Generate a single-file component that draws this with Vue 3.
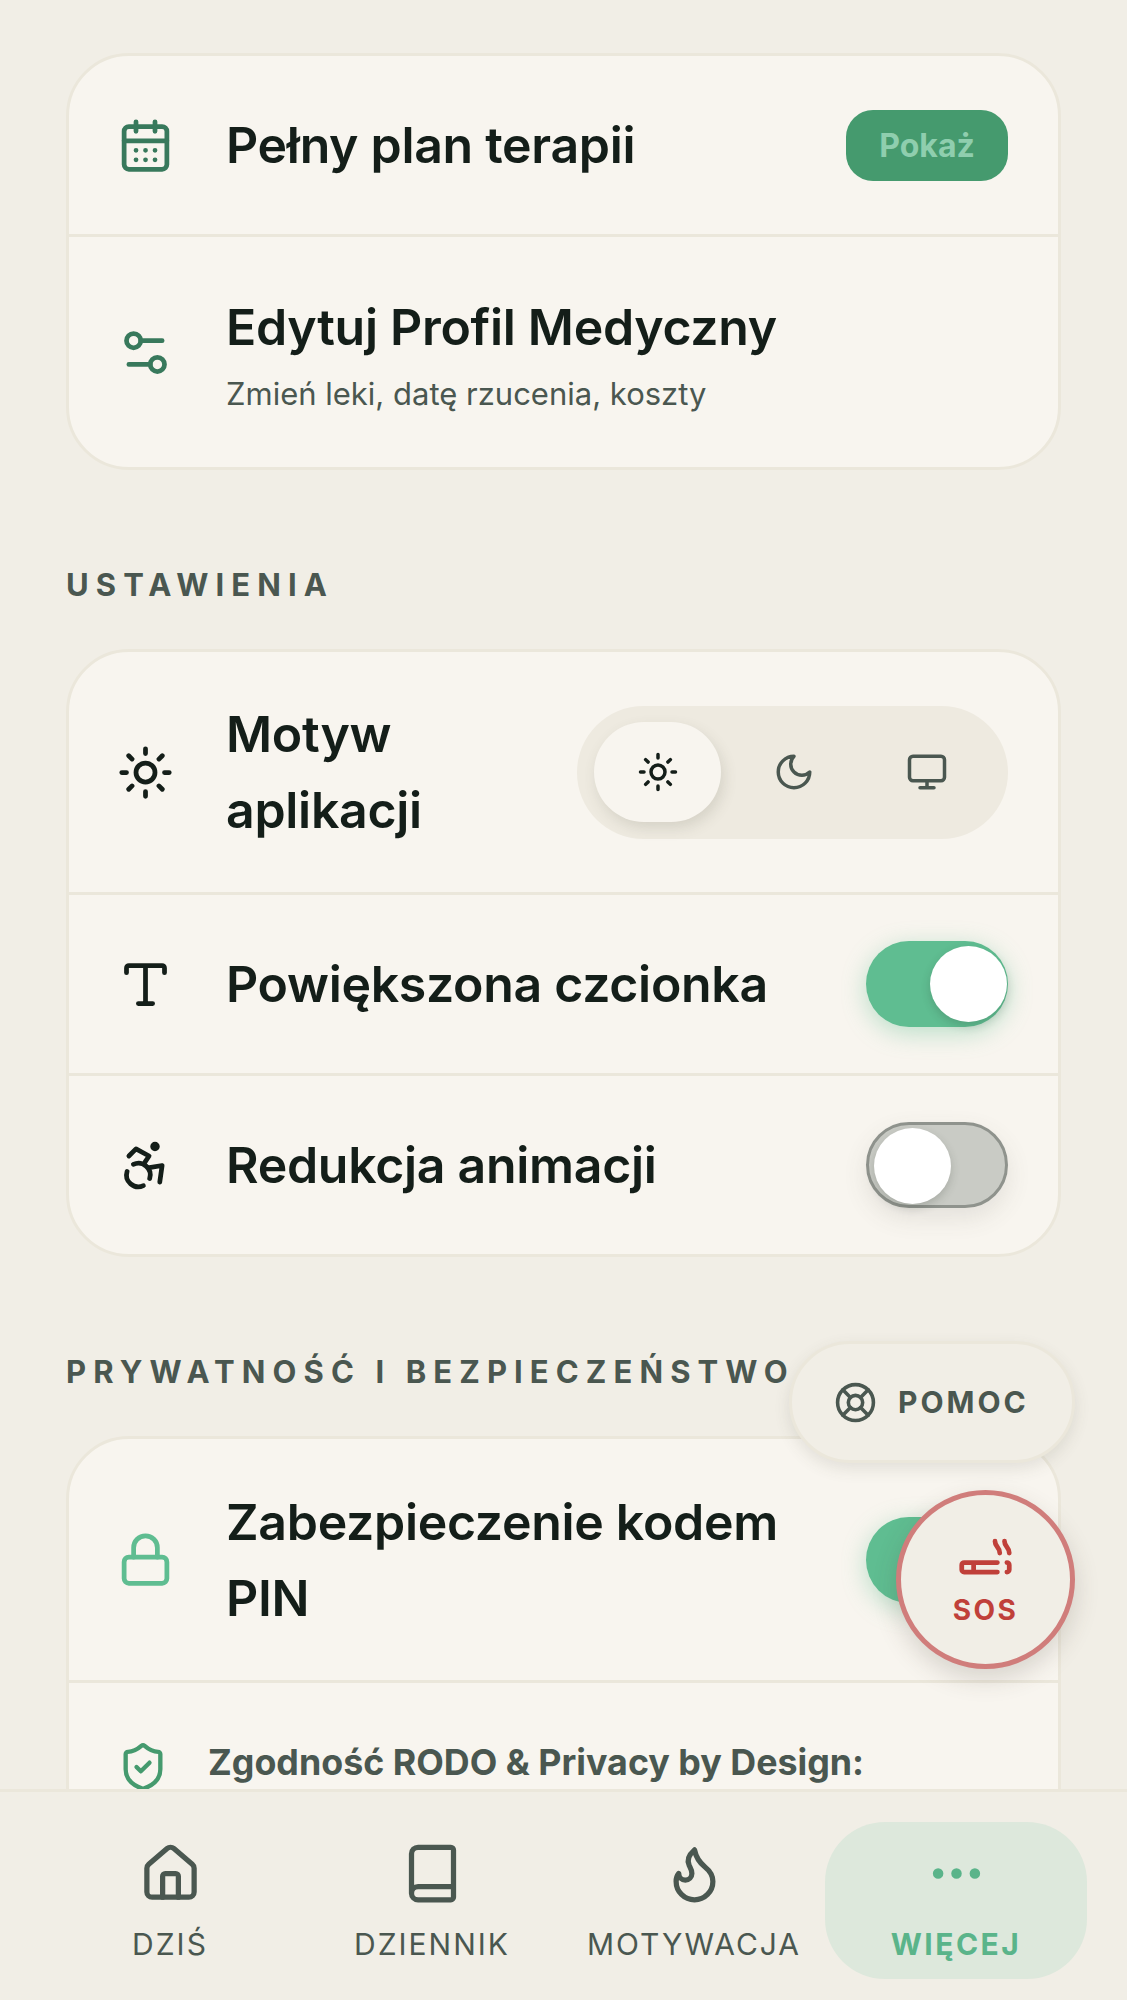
<script setup>
const navItems = [
  { label: 'DZIŚ', icon: 'home' },
  { label: 'DZIENNIK', icon: 'book' },
  { label: 'MOTYWACJA', icon: 'flame' },
  { label: 'WIĘCEJ', icon: 'more', active: true }
]
</script>

<template>
  <div class="phone">
    <main class="content">
      <div class="section-label top-label">TWOJA TERAPIA</div>

      <section class="card">
        <div class="row row-plan">
          <svg class="row-icon green" viewBox="0 0 24 24">
            <path d="M8 2v4M16 2v4" />
            <rect x="3" y="4" width="18" height="18" rx="2" />
            <path d="M3 10h18M8 14h.01M12 14h.01M16 14h.01M8 18h.01M12 18h.01M16 18h.01" />
          </svg>
          <div class="row-title">Pełny plan terapii</div>
          <button class="show-btn">Pokaż</button>
        </div>
        <div class="row row-edit">
          <svg class="row-icon green" viewBox="0 0 24 24">
            <circle cx="7" cy="7" r="3" />
            <path d="M10 7h9M14 17H5" />
            <circle cx="17" cy="17" r="3" />
          </svg>
          <div class="row-text">
            <div class="row-title">Edytuj Profil Medyczny</div>
            <div class="row-sub">Zmień leki, datę rzucenia, koszty</div>
          </div>
        </div>
      </section>

      <div class="section-label">USTAWIENIA</div>

      <section class="card">
        <div class="row row-theme">
          <svg class="row-icon dark" viewBox="0 0 24 24">
            <circle cx="12" cy="12" r="4" />
            <path d="M12 2v2M12 20v2M4.93 4.93l1.41 1.41M17.66 17.66l1.41 1.41M2 12h2M20 12h2M6.34 17.66l-1.41 1.41M19.07 4.93l-1.41 1.41" />
          </svg>
          <div class="row-title">Motyw<br />aplikacji</div>
          <div class="segment">
            <div class="seg-item seg-active">
              <svg viewBox="0 0 24 24" class="seg-icon dark">
                <circle cx="12" cy="12" r="4" />
                <path d="M12 2v2M12 20v2M4.93 4.93l1.41 1.41M17.66 17.66l1.41 1.41M2 12h2M20 12h2M6.34 17.66l-1.41 1.41M19.07 4.93l-1.41 1.41" />
              </svg>
            </div>
            <div class="seg-item">
              <svg viewBox="0 0 24 24" class="seg-icon muted">
                <path d="M12 3a6 6 0 0 0 9 9 9 9 0 1 1-9-9Z" />
              </svg>
            </div>
            <div class="seg-item">
              <svg viewBox="0 0 24 24" class="seg-icon muted">
                <rect x="2" y="3" width="20" height="14" rx="2" />
                <path d="M8 21h8M12 17v4" />
              </svg>
            </div>
          </div>
        </div>
        <div class="row row-toggle">
          <svg class="row-icon dark" viewBox="0 0 24 24">
            <path d="M4 7V5a1 1 0 0 1 1-1h14a1 1 0 0 1 1 1v2M12 4v16M9 20h6" />
          </svg>
          <div class="row-title">Powiększona czcionka</div>
          <div class="toggle on"><span class="thumb"></span></div>
        </div>
        <div class="row row-toggle">
          <svg class="row-icon dark" viewBox="0 0 24 24">
            <circle cx="16" cy="4" r="1" />
            <path d="m18 19 1-7-6 1M5 8l3-3 5.5 3-2.36 3.5M4.24 14.5a5 5 0 0 0 6.88 6M13.76 17.5a5 5 0 0 0-6.88-6" />
          </svg>
          <div class="row-title">Redukcja animacji</div>
          <div class="toggle off"><span class="thumb"></span></div>
        </div>
      </section>

      <div class="section-label">PRYWATNOŚĆ I BEZPIECZEŃSTWO</div>

      <section class="card">
        <div class="row row-pin">
          <svg class="row-icon light-green" viewBox="0 0 24 24">
            <rect x="3" y="11" width="18" height="11" rx="2" />
            <path d="M7 11V7a5 5 0 0 1 10 0v4" />
          </svg>
          <div class="row-title">Zabezpieczenie kodem<br />PIN</div>
          <div class="toggle on"><span class="thumb"></span></div>
        </div>
        <div class="row-rodo">
          <svg class="rodo-icon" viewBox="0 0 24 24">
            <path d="M20 13c0 5-3.5 7.5-7.66 8.95a1 1 0 0 1-.67-.01C7.5 20.5 4 18 4 13V6a1 1 0 0 1 1-1c2 0 4.5-1.2 6.24-2.72a1.17 1.17 0 0 1 1.52 0C14.51 3.81 17 5 19 5a1 1 0 0 1 1 1z" />
            <path d="m9 12 2 2 4-4" />
          </svg>
          <div class="rodo-title">Zgodność RODO &amp; Privacy by Design:</div>
        </div>
      </section>
    </main>

    <nav class="nav">
      <div v-for="item in navItems" :key="item.label" class="nav-item" :class="{ active: item.active }">
        <svg viewBox="0 0 24 24" class="nav-icon">
          <template v-if="item.icon === 'home'">
            <path d="M15 21v-8a1 1 0 0 0-1-1h-4a1 1 0 0 0-1 1v8" />
            <path d="M3 10a2 2 0 0 1 .709-1.528l7-5.999a2 2 0 0 1 2.582 0l7 5.999A2 2 0 0 1 21 10v9a2 2 0 0 1-2 2H5a2 2 0 0 1-2-2z" />
          </template>
          <path v-else-if="item.icon === 'book'" d="M4 19.5v-15A2.5 2.5 0 0 1 6.5 2H19a1 1 0 0 1 1 1v18a1 1 0 0 1-1 1H6.5a1 1 0 0 1 0-5H20" />
          <path v-else-if="item.icon === 'flame'" d="M8.5 14.5A2.5 2.5 0 0 0 11 12c0-1.38-.5-2-1-3-1.072-2.143-.224-4.054 2-6 .5 2.5 2 4.9 4 6.5 2 1.6 3 3.5 3 5.5a7 7 0 1 1-14 0c0-1.153.433-2.294 1-3a2.5 2.5 0 0 0 2.5 2.5z" />
          <template v-else>
            <circle cx="5" cy="12" r="1" />
            <circle cx="12" cy="12" r="1" />
            <circle cx="19" cy="12" r="1" />
          </template>
        </svg>
        <span class="nav-label">{{ item.label }}</span>
      </div>
    </nav>

    <!-- przyciski plywajace nad trescia -->
    <button class="help-btn">
      <svg viewBox="0 0 24 24" class="help-icon">
        <circle cx="12" cy="12" r="10" />
        <circle cx="12" cy="12" r="4" />
        <path d="m4.93 4.93 4.24 4.24M14.83 9.17l4.24-4.24M14.83 14.83l4.24 4.24M9.17 14.83l-4.24 4.24" />
      </svg>
      <span>POMOC</span>
    </button>
    <button class="sos-btn">
      <svg viewBox="0 0 24 24" class="sos-icon">
        <path d="M17 12H3a1 1 0 0 0-1 1v2a1 1 0 0 0 1 1h14M18 8c0-2.5-2-2.5-2-5M21 16a1 1 0 0 0 1-1v-2a1 1 0 0 0-1-1M22 8c0-2.5-2-2.5-2-5M7 12v4" />
      </svg>
      <span>SOS</span>
    </button>
  </div>
</template>

<style>
html, body {
  margin: 0;
  background: #f1eee6;
}
</style>

<style scoped>
.phone {
  position: relative;
  width: 1127px;
  height: 2000px;
  overflow: hidden;
  display: flex;
  flex-direction: column;
  background: #f1eee6;
  font-family: Inter, "Liberation Sans", sans-serif;
  color: #141e19;
}

.content {
  flex: 1;
  min-height: 0;
  overflow: hidden;
  padding: 0 66px;
}

.section-label {
  font-size: 31px;
  line-height: 38px;
  font-weight: 700;
  letter-spacing: 7.1px;
  color: #4a5750;
  margin: 96px 0 45px;
}

.top-label {
  margin: -31px 0 46px;
}

.card {
  background: #f8f5ef;
  border: 3px solid #ebe7db;
  border-radius: 63px;
  overflow: hidden;
}

.row {
  display: flex;
  align-items: center;
  padding: 0 50px 0 48px;
  border-bottom: 3px solid #ebe7db;
}

.row:last-child {
  border-bottom: none;
}

.row-plan { height: 178px; }
.row-edit { height: 230px; }
.row-theme { height: 240px; }
.row-toggle { height: 178px; }
.row-pin { height: 241px; }

.row-icon {
  flex: none;
  width: 57px;
  height: 57px;
  margin-right: 52px;
  fill: none;
  stroke-width: 2;
  stroke-linecap: round;
  stroke-linejoin: round;
}

.green { stroke: #38795c; }
.dark { stroke: #141e19; }
.muted { stroke: #4a5750; }
.light-green { stroke: #5fbd91; }

.row-title {
  flex: 1;
  font-size: 50px;
  line-height: 76px;
  font-weight: 600;
  letter-spacing: -0.3px;
}

.row-sub {
  font-size: 31px;
  line-height: 44px;
  color: #4a5750;
  margin-top: 7px;
}

.show-btn {
  width: 162px;
  height: 71px;
  border: none;
  border-radius: 27px;
  background: #459a6e;
  color: #8fceae;
  font-family: inherit;
  font-size: 32px;
  font-weight: 700;
}

.segment {
  flex: none;
  width: 431px;
  height: 133px;
  box-sizing: border-box;
  padding: 0 15px 0 17px;
  border-radius: 67px;
  background: #eeeae0;
  display: flex;
  align-items: center;
}

.seg-item {
  flex: 1;
  height: 100px;
  display: flex;
  align-items: center;
  justify-content: center;
}

.seg-active {
  flex: none;
  width: 127px;
  margin-right: 6px;
  background: #f8f5ef;
  border-radius: 50px;
  box-shadow: 3px 6px 14px rgba(90, 85, 70, 0.16);
}

.seg-icon {
  width: 42px;
  height: 42px;
  fill: none;
  stroke-width: 2;
  stroke-linecap: round;
  stroke-linejoin: round;
}

.toggle {
  flex: none;
  position: relative;
  width: 142px;
  height: 86px;
  box-sizing: border-box;
  border-radius: 43px;
}

.toggle.on {
  background: #5fbd91;
  box-shadow: 0 6px 24px rgba(95, 189, 145, 0.4);
}

.toggle.off {
  background: #c9cbc5;
  border: 3px solid #8f938d;
  box-shadow: 0 10px 24px rgba(80, 80, 70, 0.12);
}

.thumb {
  position: absolute;
  top: 5px;
  width: 77px;
  height: 76px;
  border-radius: 50%;
  background: #fff;
  box-shadow: 0 4px 10px rgba(40, 50, 40, 0.2);
}

.toggle.on .thumb { right: 1px; }
.toggle.off .thumb { left: 5px; top: 3px; }

.row-rodo {
  display: flex;
  align-items: flex-start;
  padding: 58px 50px 0 48px;
  height: 300px;
}

.rodo-icon {
  flex: none;
  width: 52px;
  height: 52px;
  margin-right: 39px;
  fill: none;
  stroke: #459a6e;
  stroke-width: 2;
  stroke-linecap: round;
  stroke-linejoin: round;
}

.rodo-title {
  font-size: 35.8px;
  line-height: 42px;
  font-weight: 700;
  color: #4a5750;
}

.nav {
  flex: none;
  height: 211px;
  box-sizing: border-box;
  border-top: 3px solid #ebe7db;
  padding: 30px 39px 0;
  display: flex;
  align-items: flex-start;
  background: #f1eee6;
  position: relative;
}

.nav-item {
  width: 262px;
  height: 157px;
  display: flex;
  flex-direction: column;
  align-items: center;
  border-radius: 60px;
  color: #4a5750;
}

.nav-item.active {
  background: #dde8dc;
  color: #5ab48a;
}

.nav-icon {
  width: 63px;
  height: 63px;
  margin-top: 20px;
  fill: none;
  stroke: currentColor;
  stroke-width: 2;
  stroke-linecap: round;
  stroke-linejoin: round;
}

.nav-label {
  margin-top: 20px;
  font-size: 30px;
  line-height: 38px;
  letter-spacing: 2px;
}

.nav-item.active .nav-label {
  font-weight: 700;
  letter-spacing: 2.5px;
}

.help-btn {
  position: absolute;
  left: 789px;
  top: 1341px;
  width: 286px;
  height: 122px;
  padding: 0 0 0 42px;
  border: 3px solid #ebe7db;
  border-radius: 61px;
  background: #f1eee6;
  color: #4a5750;
  display: flex;
  align-items: center;
  gap: 21px;
  font-family: inherit;
  font-size: 30px;
  font-weight: 700;
  letter-spacing: 3px;
  box-sizing: border-box;
  box-shadow: 0 6px 16px rgba(70, 70, 55, 0.12);
}

.help-icon {
  width: 43px;
  height: 43px;
  fill: none;
  stroke: #4a5750;
  stroke-width: 2;
  stroke-linecap: round;
  stroke-linejoin: round;
}

.sos-btn {
  position: absolute;
  left: 896px;
  top: 1490px;
  width: 179px;
  height: 179px;
  box-sizing: border-box;
  padding: 2px 0 0;
  border: 5px solid #d07d7b;
  border-radius: 50%;
  background: #f1eee6;
  color: #c0403a;
  display: flex;
  flex-direction: column;
  align-items: center;
  justify-content: center;
  font-family: inherit;
  font-size: 28px;
  font-weight: 700;
  letter-spacing: 2.5px;
  line-height: 34px;
  box-shadow: 0 10px 24px rgba(70, 60, 50, 0.18);
}

.sos-icon {
  width: 57px;
  height: 57px;
  margin-bottom: 2px;
  fill: none;
  stroke: #c0403a;
  stroke-width: 2;
  stroke-linecap: round;
  stroke-linejoin: round;
}
</style>
